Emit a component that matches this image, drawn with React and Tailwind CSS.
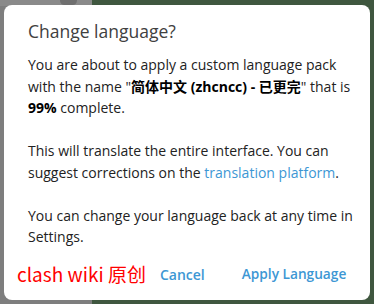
export default function App() {
  return (
    <div className="relative w-[374px] h-[304px] overflow-hidden flex" style={{ fontFamily: '"Open Sans", "Noto Sans CJK SC", sans-serif' }}>
      <div className="w-[92px] h-full bg-[#7e7e7e] flex flex-col">
        <div className="h-[6px] bg-[#8a8a8a] flex items-start">
          <div className="ml-[60px] -mt-[4px] w-[17px] h-[9px] rounded-full bg-[#6f6f6f]" />
        </div>
      </div>
      <div className="flex-1 h-full bg-[#3f573f]" />
      <div className="absolute left-[4px] top-[5px] w-[366px] h-[295px] bg-white rounded-[8px] flex flex-col">
        <div className="pl-[24px] pt-[14px] text-[17.5px] leading-[24px] text-[#404040]">Change language?</div>
        <div className="pl-[24px] pr-[10px] pt-[11px] text-[14px] leading-[21.5px] text-[#222] whitespace-nowrap">
          <p>
            You are about to apply a custom language pack<br />
            with the name "<b className="font-bold text-black leading-[21.5px]">简体中文 (zhcncc) - 已更完</b>" that is<br />
            <b className="font-bold text-black">99%</b> complete.
          </p>
          <p className="mt-[21.5px]">
            This will translate the entire interface. You can<br />
            suggest corrections on the <span className="text-[#3d97d4]">translation platform</span>.
          </p>
          <p className="mt-[21.5px]">
            You can change your language back at any time in<br />
            Settings.
          </p>
        </div>
        <div className="flex items-center mt-auto mb-[14px] h-[24px]">
          <span className="ml-[13px] text-[19px] text-[#ff0000]" style={{ fontFamily: '"Noto Sans CJK SC", sans-serif' }}>clash wiki 原创</span>
          <span className="ml-[14px] text-[14px] font-semibold text-[#3d97d4]">Cancel</span>
          <span className="ml-[37px] text-[13.7px] font-semibold text-[#3d97d4]">Apply Language</span>
        </div>
      </div>
    </div>
  );
}
